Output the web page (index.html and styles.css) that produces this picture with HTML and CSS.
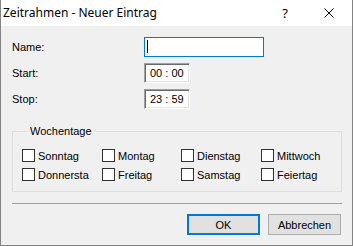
FILE: index.html
```html
<!DOCTYPE html>
<html lang="de">
<head>
<meta charset="utf-8">
<title>Zeitrahmen - Neuer Eintrag</title>
<link rel="stylesheet" href="styles.css">
</head>
<body>
<div class="window">
  <div class="titlebar">
    <span class="title">Zeitrahmen - Neuer Eintrag</span>
    <span class="tb-btn help">?</span>
    <span class="tb-btn close">
      <svg width="10" height="10" viewBox="0 0 10 10"><path d="M0.5 0.5 L9.5 9.5 M9.5 0.5 L0.5 9.5" stroke="#000" stroke-width="1" fill="none"/></svg>
    </span>
  </div>
  <div class="content">
    <div class="form">
      <label class="lbl">Name:</label>
      <div class="textbox focused"><span class="caret"></span></div>
      <label class="lbl">Start:</label>
      <div class="timebox">00 : 00</div>
      <label class="lbl">Stop:</label>
      <div class="timebox">23 : 59</div>
    </div>
    <fieldset class="group">
      <legend>Wochentage</legend>
      <div class="days">
        <div class="chk"><span class="box"></span>Sonntag</div>
        <div class="chk"><span class="box"></span>Montag</div>
        <div class="chk"><span class="box"></span>Dienstag</div>
        <div class="chk"><span class="box"></span>Mittwoch</div>
        <div class="chk"><span class="box"></span>Donnersta</div>
        <div class="chk"><span class="box"></span>Freitag</div>
        <div class="chk"><span class="box"></span>Samstag</div>
        <div class="chk"><span class="box"></span>Feiertag</div>
      </div>
    </fieldset>
    <div class="separator"></div>
    <div class="buttons">
      <button class="btn default">OK</button>
      <button class="btn">Abbrechen</button>
    </div>
  </div>
</div>
</body>
</html>
```

FILE: styles.css
```css
* { box-sizing: border-box; }
html, body { margin: 0; padding: 0; }
body {
  width: 353px;
  height: 246px;
  font-family: "Liberation Sans", Arial, sans-serif;
  font-size: 11px;
  color: #000;
  background: #f0f0f0;
}
.window {
  width: 353px;
  height: 246px;
  border: 1px solid #838383;
  border-top: none;
  background: #f0f0f0;
  display: flex;
  flex-direction: column;
}
.titlebar {
  height: 26px;
  background: #fff;
  display: flex;
  align-items: center;
  flex: none;
}
.title {
  flex: 1;
  padding-left: 2px;
  font-family: "Noto Sans", "Open Sans", sans-serif;
  font-size: 12px;
  color: #000;
  padding-bottom: 1px;
}
.tb-btn {
  width: 46px;
  height: 26px;
  display: flex;
  align-items: center;
  justify-content: center;
  font-family: "Noto Sans", sans-serif;
  font-size: 13px;
}
.help { padding-left: 4px; }
.close svg { display: block; }
.content {
  flex: 1;
  padding: 11px 10px 0 11px;
}
.form {
  display: grid;
  grid-template-columns: 132px auto;
  grid-auto-rows: 20px;
  row-gap: 6px;
  align-items: center;
  justify-items: start;
}
.lbl { line-height: 13px; }
.textbox {
  width: 120px;
  height: 20px;
  background: #fff;
  border: 1px solid #0078d7;
  padding: 2px 0 0 2px;
}
.caret {
  display: block;
  width: 1px;
  height: 13px;
  background: #000;
}
.timebox {
  width: 46px;
  height: 20px;
  background: #fff;
  border: 1px solid;
  border-color: #a0a0a0 #fff #fff #a0a0a0;
  box-shadow: inset 1px 1px 0 #696969, inset -1px -1px 0 #e3e3e3;
  padding-left: 5px;
  line-height: 18px;
  color: #000;
}
.group {
  margin: 16px 0 0 0;
  width: 330px;
  border: 1px solid #dcdcdc;
  padding: 8px 0 7px 9px;
}
.group legend {
  margin-left: 6px;
  padding: 0 2px;
  line-height: 13px;
}
.days {
  display: grid;
  grid-template-columns: 80px 79px 80px auto;
  grid-auto-rows: 19px;
  align-items: center;
}
.chk {
  display: flex;
  align-items: center;
  gap: 3px;
  white-space: nowrap;
}
.box {
  width: 13px;
  height: 13px;
  background: #fff;
  border: 1px solid #333;
  flex: none;
}
.separator {
  margin-top: 11px;
  width: 330px;
  height: 1px;
  background: #a0a0a0;
}
.buttons {
  margin-top: 10px;
  width: 329px;
  display: flex;
  justify-content: flex-end;
  gap: 8px;
}
.btn {
  width: 73px;
  height: 21px;
  background: #e1e1e1;
  border: 1px solid #adadad;
  font-family: "Liberation Sans", Arial, sans-serif;
  font-size: 11px;
  color: #000;
  padding: 0;
  margin: 0;
}
.btn.default {
  border: 2px solid #0078d7;
}
```
